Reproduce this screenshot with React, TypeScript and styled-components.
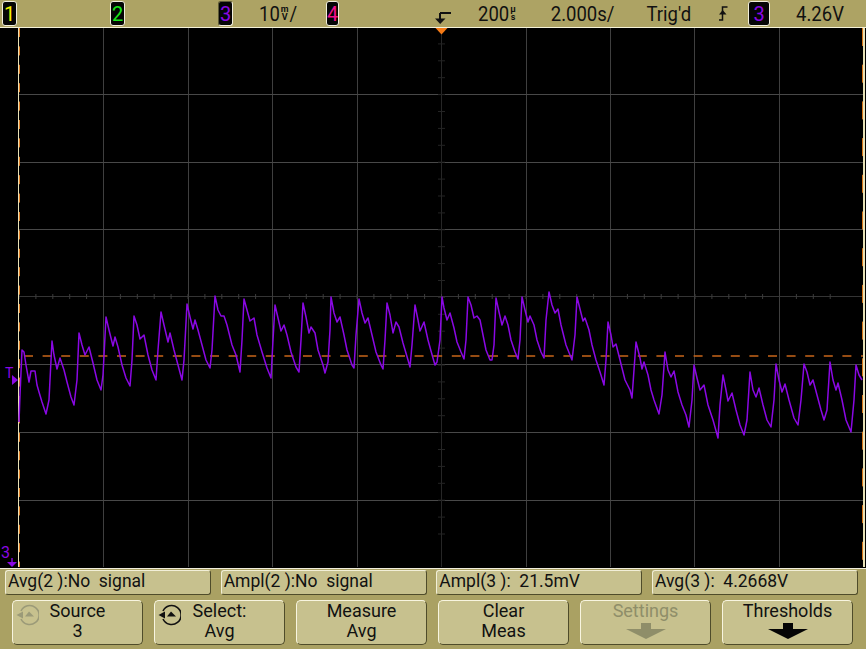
import styled, { createGlobalStyle } from "styled-components";

const PURPLE = "#8a08e4";

const TRACE = `19,422 20,395 22,350 24,352 26,365 29,382 31,371 35,371 37,385 39,392 42,402 46,414 49,400 50,380 52,341 54,355 57,369 60,358 64,370 67,382 71,397 74,405 77,380 79,333 82,345 85,355 89,347 93,363 97,380 101,390 103,375 106,317 109,330 113,346 115,337 118,347 122,365 126,378 130,386 132,360 134,316 137,325 140,339 144,335 148,355 152,370 156,380 158,350 161,312 164,325 168,342 170,333 174,350 178,365 182,380 184,360 187,304 190,317 193,329 195,320 198,330 202,345 206,360 210,368 212,350 215,296 218,310 221,316 224,316 227,325 232,345 236,355 240,372 242,340 244,299 247,310 250,321 254,318 257,335 262,352 267,368 271,378 273,340 275,305 278,318 281,331 284,325 287,335 291,352 296,367 299,372 301,340 303,303 306,317 309,333 311,327 315,333 318,350 323,365 325,373 328,362 330,330 331,297 334,313 337,322 340,317 344,335 347,350 352,365 354,368 356,335 359,299 362,313 365,323 368,318 372,335 376,352 381,365 383,369 385,340 387,303 390,315 393,333 396,322 399,327 403,343 408,360 410,367 412,345 415,305 418,320 420,331 424,322 428,340 431,351 435,365 437,362 440,340 442,297 444,308 447,320 450,313 454,328 457,342 461,352 464,359 466,340 468,297 471,305 474,318 477,316 480,320 483,335 486,350 490,360 492,360 494,345 496,298 499,312 502,325 505,316 508,325 511,340 515,352 518,359 520,340 522,297 525,310 528,322 530,316 534,325 537,340 541,352 544,358 546,320 549,292 552,305 555,313 558,309 561,325 566,345 570,355 572,360 575,335 577,297 580,309 583,321 585,318 589,330 592,345 596,360 600,372 604,385 606,360 608,322 611,335 613,347 616,344 620,360 625,380 630,390 632,398 634,370 636,342 640,358 642,369 644,362 648,375 651,390 654,400 659,414 662,395 665,352 668,370 671,377 674,371 678,392 682,405 686,415 689,427 692,400 694,365 697,378 700,390 704,385 708,405 713,420 718,438 720,405 723,375 726,390 728,401 732,393 736,410 740,425 744,435 747,420 750,372 753,390 756,397 759,388 763,405 767,420 771,427 774,400 776,364 779,380 782,392 785,384 789,400 794,418 798,425 801,400 804,364 807,372 810,385 813,380 817,395 821,410 824,420 827,410 830,362 833,380 836,390 838,383 842,400 846,420 851,432 854,400 856,365 859,375 862,380`;

const V_LINES = [103.5, 188.5, 272.5, 357.5, 526.5, 610.5, 694.5, 779.5];
const H_LINES = [94.5, 162.5, 229.5, 364.5, 432.5, 500.5];
const X_TICKS = Array.from({ length: 49 }, (_, i) => 19 + i * 16.9);
const Y_TICKS = Array.from({ length: 31 }, (_, i) => 27 + i * 16.9);

const GlobalStyle = createGlobalStyle`
    html, body {
        margin: 0;
        padding: 0;
        background: #aaa163;
    }
`;

const Page = styled.div`
    width: 866px;
    height: 649px;
    display: flex;
    flex-direction: column;
    background: #aaa163;
    font-family: Roboto, "Liberation Sans", sans-serif;
    color: #111;
    overflow: hidden;
`;

const Header = styled.header`
    height: 27px;
    flex: none;
    display: flex;
    align-items: center;
    background: #ada364;
    font-size: 18.5px;
`;

const ChannelSlot = styled.div<{ $width: number; $left?: number }>`
    width: ${(props) => props.$width}px;
    margin-left: ${(props) => props.$left ?? 0}px;
    flex: none;
    display: flex;
    align-items: center;
`;

const ChannelKey = styled.span<{ $color: string; $active?: boolean; $wide?: boolean }>`
    box-sizing: border-box;
    width: ${(props) => (props.$wide ? 22 : 15)}px;
    height: 25px;
    margin-left: 2px;
    display: flex;
    align-items: center;
    justify-content: center;
    background: #050505;
    color: ${(props) => props.$color};
    border: 1px solid #f1eedc;
    border-top-color: ${(props) => (props.$active ? "#5d5a38" : "#f1eedc")};
    border-left-color: ${(props) => (props.$active ? "#5d5a38" : "#f1eedc")};
    border-radius: 3px;
    font-size: 20px;
`;

const Scale = styled.span<{ $left: number }>`
    display: inline-flex;
    align-items: center;
    margin-left: ${(props) => props.$left}px;
    white-space: nowrap;
    transform: scaleY(1.14);
`;

const UnitStack = styled.span`
    display: inline-flex;
    flex-direction: column;
    align-items: center;
    margin: 0 1px;
    font-size: 9px;
    font-weight: 700;
    line-height: 9px;
    transform: scaleY(0.8);
`;

const DelayIcon = styled.svg`
    flex: none;
    margin: 11px 0 0 111px;
    width: 17px;
    height: 14px;
`;

const TrigEdge = styled.svg`
    flex: none;
    margin-left: 27px;
    width: 10px;
    height: 15px;
`;

const Screen = styled.main`
    position: relative;
    height: 540px;
    flex: none;
    background: #000;
    border-top: 1px solid #f4f1d8;
    border-bottom: 1px solid #f1eedc;
`;

const Trace = styled.svg`
    display: block;
    width: 866px;
    height: 540px;
`;

const TriggerLabel = styled.span`
    position: absolute;
    left: 5px;
    top: 338px;
    color: ${PURPLE};
    font-size: 14px;
    line-height: 14px;
`;

const GroundLabel = styled.span`
    position: absolute;
    left: 1px;
    top: 517px;
    color: ${PURPLE};
    font-size: 16px;
    line-height: 16px;
`;

const Footer = styled.footer`
    flex: 1;
    display: flex;
    flex-direction: column;
    padding-top: 1px;
`;

const MeasureRow = styled.div`
    display: grid;
    grid-template-columns: repeat(4, 206px);
    column-gap: 9.67px;
    padding-left: 5px;
`;

const Measure = styled.div`
    box-sizing: border-box;
    height: 25px;
    padding-left: 2px;
    background: #c7c18e;
    border: 1px solid #4f4c2a;
    border-top-color: #f2efd8;
    border-left-color: #f2efd8;
    border-radius: 3px;
    font-size: 17.5px;
    line-height: 21px;
    white-space: pre;
`;

const KeyRow = styled.div`
    display: grid;
    grid-template-columns: repeat(6, 131px);
    column-gap: 11px;
    padding: 5px 0 0 12px;
`;

const SoftKey = styled.button<{ $disabled?: boolean }>`
    position: relative;
    box-sizing: border-box;
    width: 131px;
    height: 45px;
    padding: 0;
    display: flex;
    flex-direction: column;
    align-items: center;
    background: #c7c18e;
    border: 1px solid #4f4c2a;
    border-top-color: #f8f5e0;
    border-left-color: #f8f5e0;
    border-radius: 5px;
    color: ${(props) => (props.$disabled ? "#8f8e69" : "#111")};
    font: inherit;
    font-size: 18px;
    line-height: 20px;
`;

const KeyLine = styled.span`
    display: block;
    height: 20px;
`;

const KnobIcon = styled.svg`
    position: absolute;
    left: 3px;
    top: 3px;
    width: 23px;
    height: 22px;
`;

const DownArrow = styled.svg`
    display: block;
    width: 42px;
    height: 18px;
    margin-top: 1px;
`;

const Knob = ({ color }: { color: string }) => (
    <KnobIcon viewBox="0 0 23 22">
        <path d="M5 7 A9.5 9.5 0 1 1 5 15" fill="none" stroke={color} strokeWidth="1.6" />
        <path d="M0.5 11 L7 7.5 V14.5 Z" fill={color} />
        <path d="M9 12.5 L13 7.5 L18 12.5 Z" fill={color} />
    </KnobIcon>
);

const Arrow = ({ color }: { color: string }) => (
    <DownArrow viewBox="0 0 42 18">
        <path d="M16 1 H26 V7 H41 L21 17 L1 7 H16 Z" fill={color} />
    </DownArrow>
);

const App = () => {
    return (
        <Page>
            <GlobalStyle />
            <Header>
                <ChannelSlot $width={108}><ChannelKey $color="#f2f200">1</ChannelKey></ChannelSlot>
                <ChannelSlot $width={108}><ChannelKey $color="#19e619">2</ChannelKey></ChannelSlot>
                <ChannelSlot $width={108}>
                    <ChannelKey $color={PURPLE} $active>3</ChannelKey>
                    <Scale $left={26}>10<UnitStack><span>m</span><span>V</span></UnitStack>/</Scale>
                </ChannelSlot>
                <ChannelSlot $width={0}><ChannelKey $color="#f0108c">4</ChannelKey></ChannelSlot>
                <DelayIcon viewBox="0 0 17 14">
                    <path d="M5 1 H16 M5 1 V7" stroke="#111" strokeWidth="2" fill="none" />
                    <path d="M0 6.5 H10.5 L5.2 12 Z" fill="#111" />
                </DelayIcon>
                <Scale $left={26}>200<UnitStack><span>µ</span><span>s</span></UnitStack></Scale>
                <Scale $left={34}>2.000s/</Scale>
                <Scale $left={32}>Trig'd</Scale>
                <TrigEdge viewBox="0 0 10 15">
                    <path d="M1 14 H4.5 V1 H9.5" stroke="#111" strokeWidth="1.5" fill="none" />
                    <path d="M1 8.5 H8.5 L4.7 4 Z" fill="#111" />
                </TrigEdge>
                <ChannelSlot $width={24} $left={18}>
                    <ChannelKey $color={PURPLE} $wide>3</ChannelKey>
                </ChannelSlot>
                <Scale $left={26}>4.26V</Scale>
            </Header>
            <Screen>
                <Trace viewBox="0 28 866 540">
                    {V_LINES.map((x) => (
                        <line key={x} x1={x} x2={x} y1={28} y2={567} stroke="#3f3f3f" />
                    ))}
                    {H_LINES.map((y) => (
                        <line key={y} x1={19} x2={863} y1={y} y2={y} stroke="#484848" />
                    ))}
                    <line x1={19} x2={863} y1={296.5} y2={296.5} stroke="#343434" />
                    <line x1={441.5} x2={441.5} y1={28} y2={567} stroke="#262626" />
                    {X_TICKS.map((x) => (
                        <line key={x} x1={x} x2={x} y1={294} y2={299} stroke="#3c3c3c" />
                    ))}
                    {Y_TICKS.map((y) => (
                        <line key={y} x1={438} x2={445} y1={y} y2={y} stroke="#242424" />
                    ))}
                    <line x1={18.5} x2={18.5} y1={28} y2={567} stroke="#e9e2b8" />
                    <line x1={19.5} x2={19.5} y1={28} y2={567} stroke="#e07c20" strokeDasharray="9 9.4" />
                    <line x1={864} x2={864} y1={28} y2={567} stroke="#e9e2b8" strokeWidth="2" />
                    <line x1={862.5} x2={862.5} y1={28} y2={567} stroke="#d87418" strokeDasharray="18 18.7" />
                    <line x1={24} x2={863} y1={356} y2={356} stroke="#c8661a" strokeWidth="1.5" strokeDasharray="9 9.6" />
                    <polyline points={TRACE} fill="none" stroke={PURPLE} strokeWidth="1.5" strokeLinejoin="round" />
                    <path d="M435.5 28 H447.5 L441.5 34.5 Z" fill="#f47a16" />
                    <path d="M12 375 L18 380 L12 385 Z" fill={PURPLE} />
                    <path d="M12 558 V563" stroke={PURPLE} strokeWidth="1.4" />
                    <path d="M7 562 H17 L12 567 Z" fill={PURPLE} />
                </Trace>
                <TriggerLabel>T</TriggerLabel>
                <GroundLabel>3</GroundLabel>
            </Screen>
            <Footer>
                <MeasureRow>
                    <Measure>Avg(2 ):No  signal</Measure>
                    <Measure>Ampl(2 ):No  signal</Measure>
                    <Measure>Ampl(3 ):  21.5mV</Measure>
                    <Measure>Avg(3 ):  4.2668V</Measure>
                </MeasureRow>
                <KeyRow>
                    <SoftKey>
                        <Knob color="#9b9a78" />
                        <KeyLine>Source</KeyLine>
                        <KeyLine>3</KeyLine>
                    </SoftKey>
                    <SoftKey>
                        <Knob color="#111" />
                        <KeyLine>Select:</KeyLine>
                        <KeyLine>Avg</KeyLine>
                    </SoftKey>
                    <SoftKey>
                        <KeyLine>Measure</KeyLine>
                        <KeyLine>Avg</KeyLine>
                    </SoftKey>
                    <SoftKey>
                        <KeyLine>Clear</KeyLine>
                        <KeyLine>Meas</KeyLine>
                    </SoftKey>
                    <SoftKey $disabled>
                        <KeyLine>Settings</KeyLine>
                        <Arrow color="#8f8e69" />
                    </SoftKey>
                    <SoftKey>
                        <KeyLine>Thresholds</KeyLine>
                        <Arrow color="#050505" />
                    </SoftKey>
                </KeyRow>
            </Footer>
        </Page>
    );
};

export default App;
